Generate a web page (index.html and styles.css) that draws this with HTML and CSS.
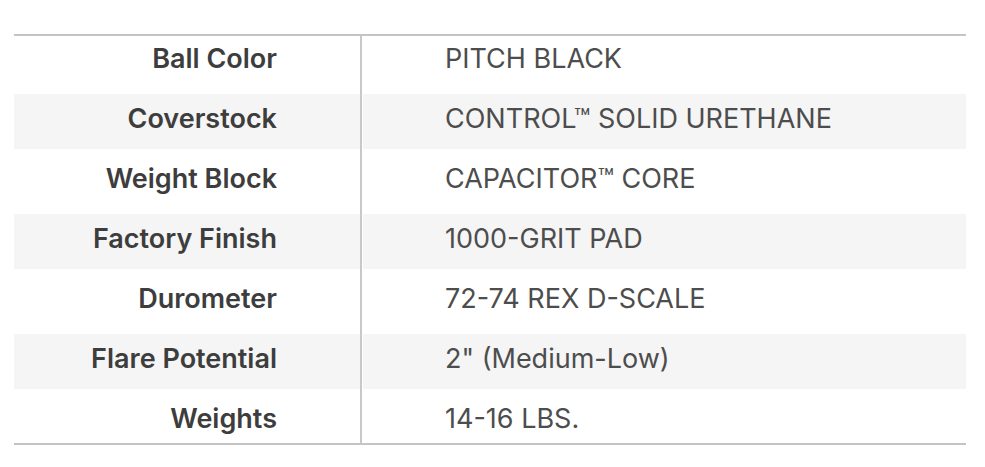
FILE: index.html
```html
<!DOCTYPE html>
<html lang="en">
<head>
<meta charset="utf-8">
<title>Specifications</title>
<link rel="stylesheet" href="styles.css">
</head>
<body>
<div class="specs">
  <div class="row"><div class="label">Ball Color</div><div class="value">PITCH BLACK</div></div>
  <div class="row alt"><div class="label">Coverstock</div><div class="value">CONTROL™ SOLID URETHANE</div></div>
  <div class="row"><div class="label">Weight Block</div><div class="value">CAPACITOR™ CORE</div></div>
  <div class="row alt"><div class="label">Factory Finish</div><div class="value">1000-GRIT PAD</div></div>
  <div class="row"><div class="label">Durometer</div><div class="value">72-74 REX D-SCALE</div></div>
  <div class="row alt"><div class="label">Flare Potential</div><div class="value">2" (Medium-Low)</div></div>
  <div class="row"><div class="label">Weights</div><div class="value">14-16 LBS.</div></div>
</div>
</body>
</html>
```
FILE: styles.css
```css
html, body {
  margin: 0;
  padding: 0;
  background: #ffffff;
}
body {
  font-family: Inter, "Liberation Sans", Arial, sans-serif;
  padding-top: 34px;
}
.specs {
  margin-left: 14px;
  width: 952px;
  border-top: 2px solid #c4c4c4;
  border-bottom: 2px solid #c4c4c4;
}
.row {
  display: grid;
  grid-template-columns: 348px 1fr;
  height: 60px;
}
.row:first-child {
  height: 58px;
}
.row:last-child {
  height: 49px;
}
.label, .value {
  font-size: 27px;
  line-height: 30px;
  padding-top: 10px;
  background-repeat: no-repeat;
}
.row:first-child .label, .row:first-child .value {
  padding-top: 8px;
}
.label {
  text-align: right;
  font-weight: 600;
  color: #3d3d3d;
  padding-right: 83px;
  border-right: 2px solid #c8c8c8;
}
.value {
  font-weight: 400;
  color: #4d4d4d;
  padding-left: 82px;
  margin-left: 1px;
}
.row.alt .label, .row.alt .value {
  background-image: linear-gradient(#f5f5f5, #f5f5f5);
  background-size: 100% 55px;
  background-position: 0 0;
}
```
